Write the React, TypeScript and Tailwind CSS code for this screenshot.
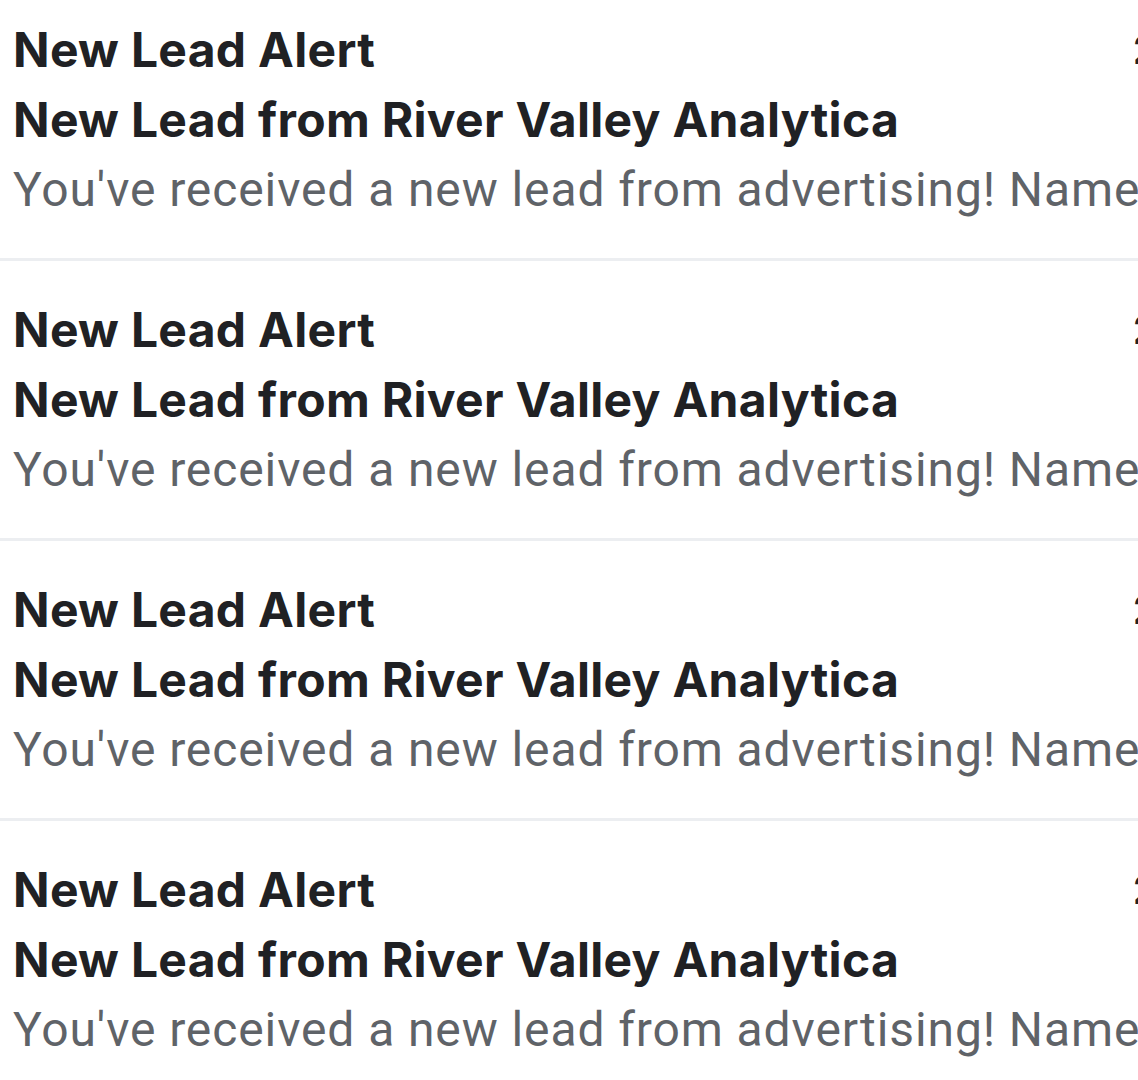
import React from "react";

type Mail = {
  sender: string;
  subject: string;
  preview: string;
  time: string;
};

const mails: Mail[] = Array.from({ length: 4 }, () => ({
  sender: "New Lead Alert",
  subject: "New Lead from River Valley Analytica",
  preview:
    "You've received a new lead from advertising! Name: Jordan Ellis, Email: jordan@rivervalley.io",
  time: "2:41 PM",
}));

const titleFont = { fontFamily: "Inter, 'Noto Sans', sans-serif" };

export default function App() {
  return (
    <div className="h-[1080px] w-full overflow-hidden bg-white">
      {/* list is scrolled a little, so the first row starts above the fold */}
      <div className="-mt-[19px]">
        {mails.map((mail, i) => (
          <div key={i} className="h-[280px] overflow-hidden border-b-[3px] border-[#eceef1] pl-[13px]">
            <div className="pt-[34px]">
              <div className="flex h-[70px] items-center whitespace-nowrap">
                <span
                  className="w-[1120px] shrink-0 text-[48px] font-bold tracking-[0.3px] text-[#202124]"
                  style={titleFont}
                >
                  {mail.sender}
                </span>
                <span className="text-[40px] font-bold text-[#202124]" style={titleFont}>
                  {mail.time}
                </span>
              </div>
              <div
                className="h-[70px] whitespace-nowrap text-[48px] leading-[70px] font-bold tracking-[0.3px] text-[#202124]"
                style={titleFont}
              >
                {mail.subject}
              </div>
              <div
                className="h-[70px] whitespace-nowrap text-[48px] leading-[70px] tracking-[0.9px] text-[#5f6368]"
                style={{ fontFamily: "Roboto, sans-serif" }}
              >
                {mail.preview}
              </div>
            </div>
          </div>
        ))}
      </div>
    </div>
  );
}
